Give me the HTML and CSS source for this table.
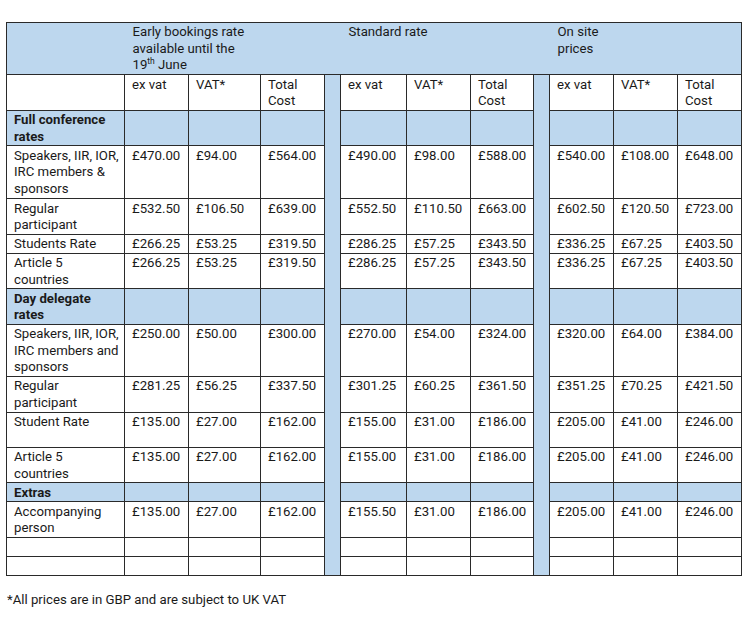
FILE: index.html
```html
<!DOCTYPE html>
<html lang="en">
<head>
<meta charset="utf-8">
<title>Conference rates</title>
<link rel="stylesheet" href="styles.css">
</head>
<body>
<table class="rates">
  <colgroup>
    <col class="c-label"><col class="c-a"><col class="c-b"><col class="c-a">
    <col class="c-sep">
    <col class="c-c"><col class="c-a"><col class="c-d">
    <col class="c-sep">
    <col class="c-a"><col class="c-a"><col class="c-a">
  </colgroup>
  <tr class="r-head blue">
    <td></td>
    <td colspan="3">Early bookings rate<br>available until the<br>19<sup>th</sup> June</td>
    <td></td>
    <td colspan="3">Standard rate</td>
    <td></td>
    <td colspan="3">On site<br>prices</td>
  </tr>
  <tr class="r-35">
    <td></td><td>ex vat</td><td>VAT*</td><td>Total Cost</td>
    <td class="sep" rowspan="15"></td>
    <td>ex vat</td><td>VAT*</td><td>Total Cost</td>
    <td class="sep" rowspan="15"></td>
    <td>ex vat</td><td>VAT*</td><td>Total Cost</td>
  </tr>
  <tr class="r-35 blue">
    <td class="b">Full conference rates</td><td></td><td></td><td></td>
    <td></td><td></td><td></td>
    <td></td><td></td><td></td>
  </tr>
  <tr class="r-53">
    <td>Speakers, IIR, IOR, IRC members &amp; sponsors</td><td>£470.00</td><td>£94.00</td><td>£564.00</td>
    <td>£490.00</td><td>£98.00</td><td>£588.00</td>
    <td>£540.00</td><td>£108.00</td><td>£648.00</td>
  </tr>
  <tr class="r-35">
    <td>Regular participant</td><td>£532.50</td><td>£106.50</td><td>£639.00</td>
    <td>£552.50</td><td>£110.50</td><td>£663.00</td>
    <td>£602.50</td><td>£120.50</td><td>£723.00</td>
  </tr>
  <tr class="r-20">
    <td>Students Rate</td><td>£266.25</td><td>£53.25</td><td>£319.50</td>
    <td>£286.25</td><td>£57.25</td><td>£343.50</td>
    <td>£336.25</td><td>£67.25</td><td>£403.50</td>
  </tr>
  <tr class="r-36">
    <td>Article 5<br>countries</td><td>£266.25</td><td>£53.25</td><td>£319.50</td>
    <td>£286.25</td><td>£57.25</td><td>£343.50</td>
    <td>£336.25</td><td>£67.25</td><td>£403.50</td>
  </tr>
  <tr class="r-34 blue">
    <td class="b">Day delegate rates</td><td></td><td></td><td></td>
    <td></td><td></td><td></td>
    <td></td><td></td><td></td>
  </tr>
  <tr class="r-52">
    <td>Speakers, IIR, IOR, IRC members and sponsors</td><td>£250.00</td><td>£50.00</td><td>£300.00</td>
    <td>£270.00</td><td>£54.00</td><td>£324.00</td>
    <td>£320.00</td><td>£64.00</td><td>£384.00</td>
  </tr>
  <tr class="r-37">
    <td>Regular participant</td><td>£281.25</td><td>£56.25</td><td>£337.50</td>
    <td>£301.25</td><td>£60.25</td><td>£361.50</td>
    <td>£351.25</td><td>£70.25</td><td>£421.50</td>
  </tr>
  <tr class="r-35">
    <td>Student Rate</td><td>£135.00</td><td>£27.00</td><td>£162.00</td>
    <td>£155.00</td><td>£31.00</td><td>£186.00</td>
    <td>£205.00</td><td>£41.00</td><td>£246.00</td>
  </tr>
  <tr class="r-35">
    <td>Article 5<br>countries</td><td>£135.00</td><td>£27.00</td><td>£162.00</td>
    <td>£155.00</td><td>£31.00</td><td>£186.00</td>
    <td>£205.00</td><td>£41.00</td><td>£246.00</td>
  </tr>
  <tr class="r-19 blue">
    <td class="b">Extras</td><td></td><td></td><td></td>
    <td></td><td></td><td></td>
    <td></td><td></td><td></td>
  </tr>
  <tr class="r-35">
    <td>Accompanying person</td><td>£135.00</td><td>£27.00</td><td>£162.00</td>
    <td>£155.50</td><td>£31.00</td><td>£186.00</td>
    <td>£205.00</td><td>£41.00</td><td>£246.00</td>
  </tr>
  <tr class="r-20">
    <td></td><td></td><td></td><td></td>
    <td></td><td></td><td></td>
    <td></td><td></td><td></td>
  </tr>
  <tr class="r-20">
    <td></td><td></td><td></td><td></td>
    <td></td><td></td><td></td>
    <td></td><td></td><td></td>
  </tr>
</table>
<p class="note">*All prices are in GBP and are subject to UK VAT</p>
</body>
</html>
```
FILE: styles.css
```css
html, body {
  margin: 0;
  background: #fff;
}
body {
  padding: 22px 0 0 6px;
  font-family: Roboto, "Liberation Sans", sans-serif;
  font-size: 13.2px;
  color: #1a1a1a;
}
.rates {
  border-collapse: collapse;
  table-layout: fixed;
  width: 736px;
}
.c-label { width: 118px; }
.c-a { width: 64px; }
.c-b { width: 72px; }
.c-c { width: 66px; }
.c-d { width: 63px; }
.c-sep { width: 16px; }
.rates td {
  border: 1px solid #2a2a2a;
  padding: 1.5px 2px 0 7px;
  vertical-align: top;
  line-height: 16.5px;
  overflow: hidden;
}
.rates .blue td,
.rates td.sep {
  background: #bdd7ee;
}
.rates td.sep {
  padding: 0;
}
.r-head td {
  border-left: none;
  border-right: none;
  padding-left: 8px;
  padding-top: 1px;
}
.r-head td:first-child { border-left: 1px solid #2a2a2a; }
.r-head td:last-child { border-right: 1px solid #2a2a2a; }
.r-head { height: 52px; }
.r-19 { height: 19px; }
.r-20 { height: 19px; }
.r-34 { height: 34px; }
.r-35 { height: 35px; }
.r-36 { height: 35px; }
.r-37 { height: 36px; }
.r-52 { height: 52px; }
.r-53 { height: 53px; }
.b { font-weight: bold; }
sup {
  font-size: 8.5px;
  line-height: 0;
  vertical-align: 5px;
}
.note {
  margin: 15px 0 0 1px;
  font-size: 13.2px;
  line-height: 17px;
}
```
